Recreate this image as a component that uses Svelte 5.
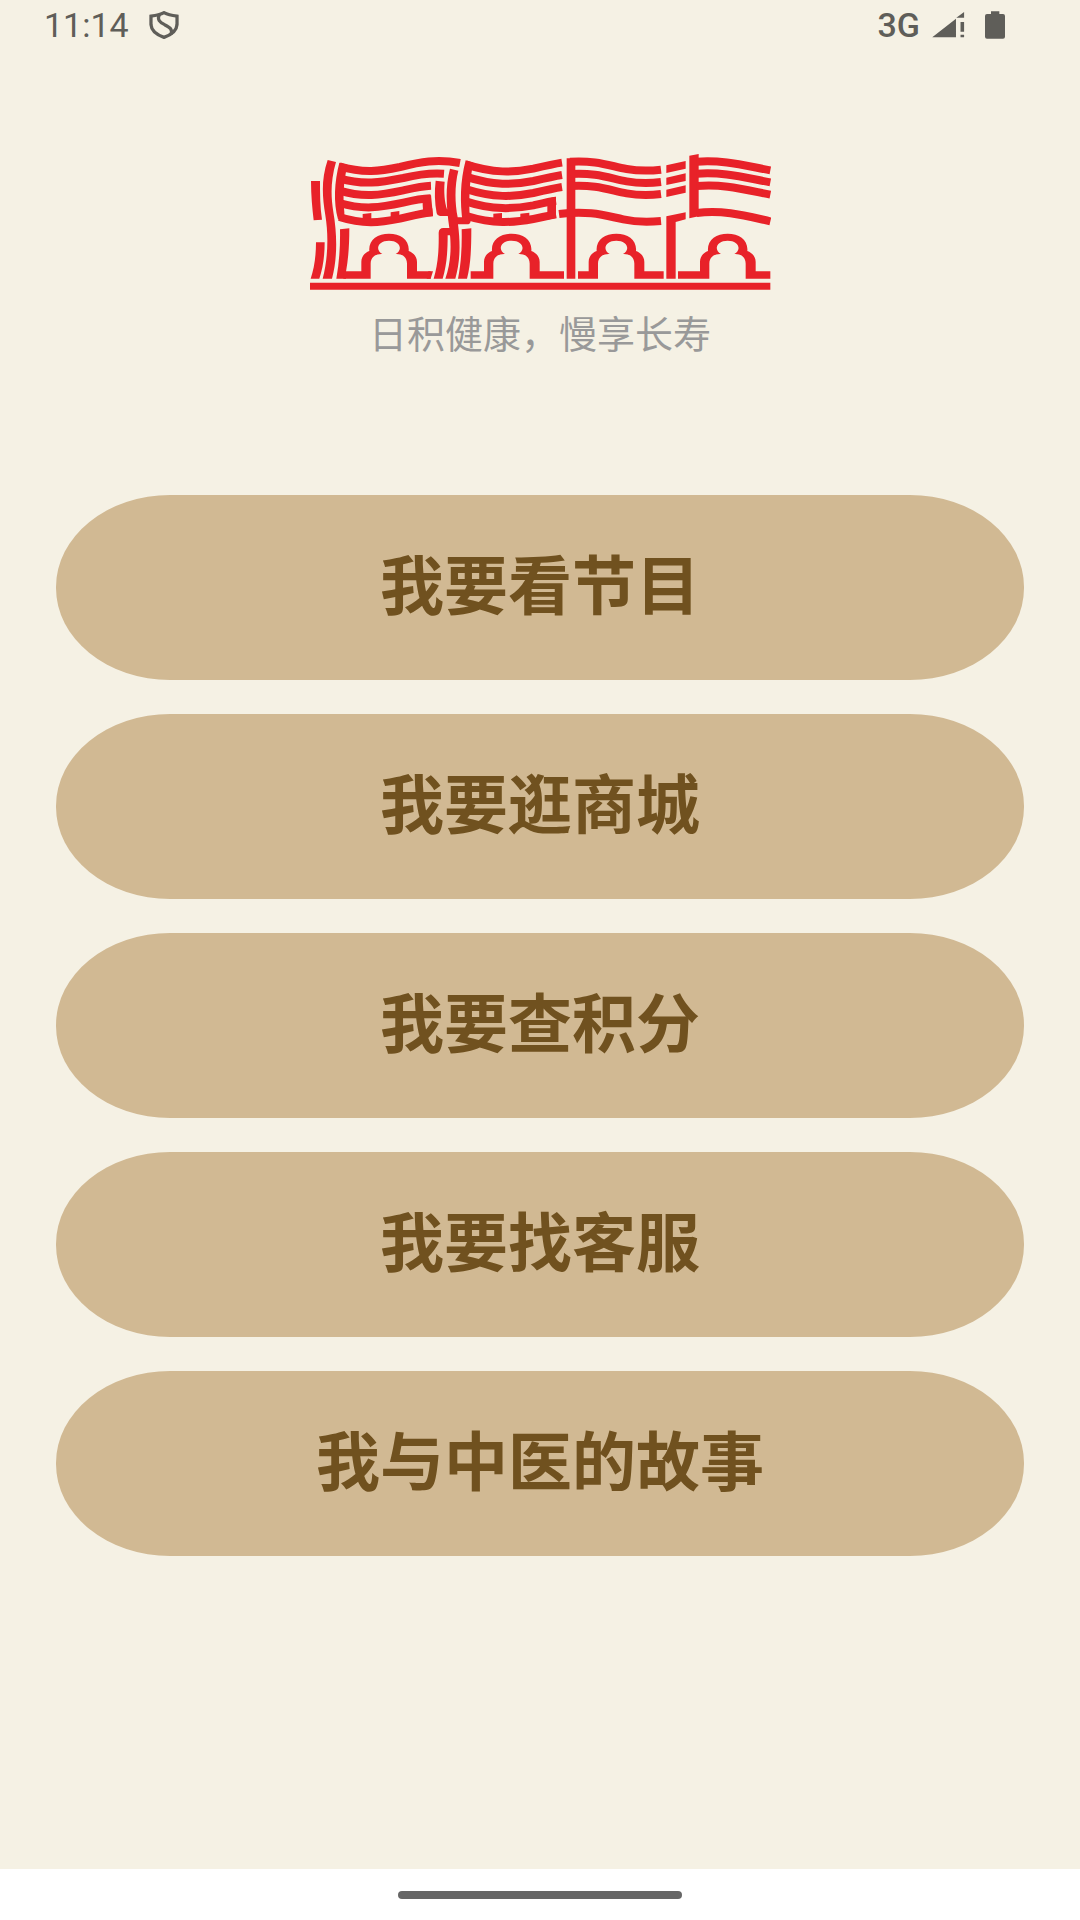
<script>
  const actions = ['我要看节目', '我要逛商城', '我要查积分', '我要找客服', '我与中医的故事'];

  const arch = (c, left, right) =>
    `M${left} 378H${c - 83}V350C${c - 83} 333 ${c - 72} 322 ${c - 59} 317` +
    `C${c - 62} 284 ${c - 35} 265 ${c} 265C${c + 35} 265 ${c + 62} 284 ${c + 59} 317` +
    `C${c + 72} 322 ${c + 84} 333 ${c + 84} 350V378H${right}V400H${c + 54}V355` +
    `C${c + 54} 335 ${c + 40} 325 ${c + 20} 326C${c + 44} 312 ${c + 32} 286 ${c} 286` +
    `C${c - 32} 286 ${c - 44} 312 ${c - 20} 326C${c - 40} 325 ${c - 55} 335 ${c - 55} 355V400H${left}Z`;

  const arches = [arch(267, 130, 392), arch(635, 512, 792), arch(949, 834, 1091), arch(1283, 1134, 1411)];

  const stripes = [
    'M118 63C190 84 240 78 300 65C360 50 410 40 480 53',
    'M118 99C190 120 240 112 310 98C350 88 390 82 432 85',
    'M118 136C190 157 240 150 310 135C340 128 365 122 393 121',
    'M118 173C190 194 240 187 310 172C340 165 370 160 392 159',
    'M118 215C190 238 240 232 300 220C340 211 365 204 398 201',
    'M497 57C580 84 640 82 700 70C730 63 760 56 786 52',
    'M497 94C580 121 640 119 700 107C730 100 760 93 786 89',
    'M497 131C580 158 640 155 700 143C730 136 760 129 786 125',
    'M497 168C580 195 640 191 700 180C730 173 745 169 768 166',
    'M500 212C580 237 640 232 700 221C730 215 745 211 768 207',
    'M810 49C890 44 930 62 980 71C1020 78 1050 77 1083 73',
    'M810 86C890 81 930 99 980 108C1020 115 1050 114 1083 110',
    'M810 122C890 117 930 135 980 144C1020 151 1050 150 1083 146',
    'M777 206C870 194 920 212 970 222C1010 231 1050 230 1083 227',
    'M1190 49C1270 43 1330 60 1411 75',
    'M1190 85C1270 79 1330 96 1411 111',
    'M1190 122C1270 115 1330 132 1411 148',
    'M1190 203C1270 192 1340 212 1411 228'
  ];

  const solids = [
    'M33 107H60C60 145 60 185 66 223L41 225C37 190 33 150 33 107Z',
    'M48 291H74C74 335 68 370 58 400H32C42 370 48 335 48 291Z',
    'M83 44L108 50C92 105 92 150 100 200C112 270 112 340 96 400H68C84 340 86 270 76 210C66 150 64 100 83 44Z',
    'M120 252L148 249C148 300 145 340 138 379V400H109C118 350 121 300 120 252Z',
    'M118 52L143 58C129 110 129 160 133 200V229L114 222C100 170 103 110 118 52Z',
    'M367 157L393 149L399 212L370 215Z',
    'M188 206L214 203V226H188ZM272 201L298 197V220H272Z',
    'M385 378H399L392 400H380Z',
    'M407 106L434 109C431 140 434 170 441 192H455V212H420Q412 212 410 204C404 170 403 140 407 106Z',
    'M450 70L475 76C464 120 464 170 473 216H512V226Q512 237 500 237H474C482 300 480 350 466 400H436C454 350 453 300 450 270H443C443 320 440 360 428 400H401C413 360 417 320 416 262Q417 248 430 248H448C440 190 434 130 450 70Z',
    'M485 252L514 249C514 310 512 360 501 400H474C484 350 486 300 485 252Z',
    'M497 45L520 52C508 110 506 160 510 232H488C480 170 480 110 497 45Z',
    'M742 160L768 154V218L742 223Z',
    'M580 205L606 203V226H580ZM661 205L688 202V222H661Z',
    'M800 39H826V400H800Z',
    'M1099 60L1157 47V70L1099 83ZM1099 97L1157 84V107L1099 119ZM1099 133L1157 120V142L1099 155Z',
    'M1099 213L1157 201V222L1127 230V400H1099Z',
    'M1168 31L1196 26V213L1168 219Z',
    'M30 412H1411V433H30Z'
  ];
</script>

<div class="screen">
  <header class="status">
    <div class="group">
      <span class="clock">11:14</span>
      <svg class="shield" viewBox="0 0 90 86" aria-hidden="true">
        <path d="M45 5C34 11 20 14 5 16V42C6 60 22 73 45 81C68 73 84 60 85 42V16C70 14 56 11 45 5Z" />
        <path d="M31 10C23 27 32 34 47 42C65 51 71 56 67 72" />
      </svg>
    </div>
    <div class="group tight">
      <span class="network">3G</span>
      <svg class="signal" viewBox="0 0 100 80" aria-hidden="true">
        <path d="M0 78L73 21V78ZM74 18L98 0V18ZM87 31H98V61H87ZM87 70H98V78H87Z" />
      </svg>
      <svg class="battery" viewBox="0 0 60 82" aria-hidden="true">
        <path d="M18 0H43V8H54Q60 8 60 14V76Q60 82 54 82H6Q0 82 0 76V14Q0 8 6 8H18Z" />
      </svg>
    </div>
  </header>

  <main>
    <svg class="logo" viewBox="30 20 1383 420" role="img" aria-label="慢慢长长">
      {#each solids as d}<path {d} />{/each}
      {#each arches as d}<path {d} />{/each}
      {#each stripes as d}<path class="stripe" {d} />{/each}
    </svg>
    <p class="tagline">日积健康，慢享长寿</p>

    <nav class="actions">
      {#each actions as label}
        <button type="button">{label}</button>
      {/each}
    </nav>
  </main>

  <footer class="gesture"><span class="handle"></span></footer>
</div>

<style>
  :global(body) {
    margin: 0;
  }

  .screen {
    display: flex;
    flex-direction: column;
    min-height: 100vh;
    background: #f5f1e4;
    font-family: Roboto, 'Noto Sans CJK SC', sans-serif;
  }

  .status {
    display: flex;
    justify-content: space-between;
    align-items: center;
    height: 50px;
    padding: 0 75px 0 44px;
    color: #5f5e59;
    font-size: 34px;
    line-height: 50px;
  }

  .group {
    display: flex;
    align-items: center;
    gap: 20px;
  }

  .tight .signal {
    margin-left: -8px;
  }

  .network {
    font-weight: 500;
  }

  .status svg {
    fill: currentColor;
  }

  .status .shield {
    width: 30px;
    height: 28px;
    fill: none;
    stroke: currentColor;
    stroke-width: 10;
  }

  .signal {
    width: 33px;
    height: 26px;
  }

  .battery {
    width: 20px;
    height: 28px;
  }

  main {
    flex: 1;
    display: flex;
    flex-direction: column;
    align-items: center;
    padding: 102px 56px 0;
  }

  .logo {
    width: 461px;
    height: 140px;
    fill: #e82229;
  }

  .stripe {
    fill: none;
    stroke: #e82229;
    stroke-width: 24;
  }

  .tagline {
    margin: 16px 0 0;
    color: #999;
    font-size: 38px;
    line-height: 54px;
  }

  .actions {
    display: flex;
    flex-direction: column;
    gap: 34px;
    width: 100%;
    margin-top: 133px;
  }

  button {
    height: 185px;
    padding: 0;
    border: 0;
    border-radius: 114px / 92px;
    background: #d1b993;
    color: #70511f;
    font-family: inherit;
    font-size: 64px;
    font-weight: 700;
    line-height: 80px;
    cursor: pointer;
  }

  .gesture {
    display: flex;
    justify-content: center;
    align-items: center;
    height: 51px;
    background: #fff;
  }

  .handle {
    width: 284px;
    height: 8px;
    border-radius: 4px;
    background: #666;
  }
</style>
